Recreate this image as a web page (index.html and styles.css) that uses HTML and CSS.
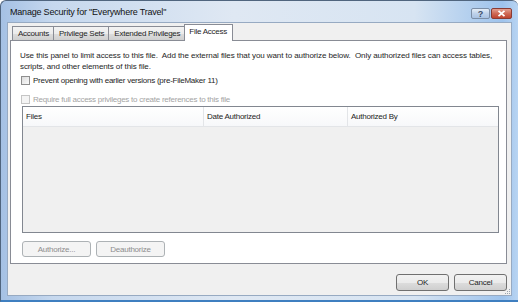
FILE: index.html
```html
<!DOCTYPE html>
<html lang="en">
<head>
    <meta charset="UTF-8">
    <meta name="viewport" content="width=device-width, initial-scale=1.0">
    <title>Manage Security</title>
    <link rel="stylesheet" href="styles.css">
</head>
<body>
<div class="window">
    <div class="titlebar">
        <span class="title">Manage Security for "Everywhere Travel"</span>
        <div class="caption-buttons">
            <span class="cap-btn help">?</span>
            <span class="cap-btn close">
                <svg width="9" height="7" viewBox="0 0 9 7"><path d="M1.5 0.8 L7.5 6.2 M7.5 0.8 L1.5 6.2" stroke="#fff" stroke-width="1.8"/></svg>
            </span>
        </div>
    </div>

    <div class="client">
        <ul class="tabs">
            <li class="tab">Accounts</li>
            <li class="tab">Privilege Sets</li>
            <li class="tab">Extended Privileges</li>
            <li class="tab active">File Access</li>
        </ul>

        <section class="panel">
            <p class="intro">Use this panel to limit access to this file.&nbsp; Add the external files that you want to authorize below.&nbsp; Only authorized files can access tables, scripts, and other elements of this file.</p>

            <label class="check-row"><span class="check"></span>Prevent opening with earlier versions (pre-FileMaker 11)</label>
            <label class="check-row disabled"><span class="check"></span>Require full access privileges to create references to this file</label>

            <div class="listbox">
                <div class="list-header">
                    <span class="col col-files">Files</span>
                    <span class="col col-date">Date Authorized</span>
                    <span class="col col-by">Authorized By</span>
                </div>
                <div class="list-body"></div>
            </div>

            <div class="panel-buttons">
                <button class="btn" disabled>Authorize...</button>
                <button class="btn" disabled>Deauthorize</button>
            </div>
        </section>

        <div class="dialog-buttons">
            <button class="btn btn-wide">OK</button>
            <button class="btn btn-wide">Cancel</button>
        </div>

        <!-- size grip -->
        <svg class="grip" width="6" height="6" viewBox="0 0 6 6">
            <rect x="4" y="0" width="1" height="1" fill="#9aa4ae"/>
            <rect x="2" y="2" width="1" height="1" fill="#9aa4ae"/>
            <rect x="4" y="2" width="1" height="1" fill="#9aa4ae"/>
            <rect x="0" y="4" width="1" height="1" fill="#9aa4ae"/>
            <rect x="2" y="4" width="1" height="1" fill="#9aa4ae"/>
            <rect x="4" y="4" width="1" height="1" fill="#9aa4ae"/>
        </svg>
    </div>
</div>
</body>
</html>
```

FILE: styles.css
```css
* {
    margin: 0;
    padding: 0;
    box-sizing: border-box;
}

html, body {
    height: 100%;
}

body {
    font-family: "Liberation Sans", Arial, sans-serif;
    font-size: 8px;
    letter-spacing: -0.25px;
    color: #1e1e1e;
    background-color: #fff;
}

/* Window frame */
.window {
    width: 518px;
    height: 302px;
    display: flex;
    flex-direction: column;
    border: 1px solid #50657e;
    border-right: none;
    border-bottom: 2px solid #3f7fc0;
    border-radius: 6px 6px 0 0;
    background: linear-gradient(to right, #a5c1e4 0%, #c6d8ee 10%, #dfe8f3 45%, #d7e4f2 80%, #9ec3ec 97%, #b8d4f2 100%);
    overflow: hidden;
}

.titlebar {
    height: 21px;
    display: flex;
    align-items: center;
    justify-content: space-between;
    padding: 0 6px 0 9px;
}

.title {
    font-size: 9px;
    letter-spacing: -0.2px;
    color: #111;
    margin-top: 1px;
}

.caption-buttons {
    display: flex;
    gap: 1px;
    align-self: flex-start;
    margin-top: 7px;
}

.cap-btn {
    display: flex;
    align-items: center;
    justify-content: center;
    height: 11px;
    border-radius: 2px;
    border: 1px solid #7c8ea6;
    font-size: 9px;
    font-weight: bold;
    letter-spacing: 0;
}

.cap-btn.help {
    width: 19px;
    color: #3c4f68;
    background: linear-gradient(to bottom, #e4edf7, #bfd2ea 50%, #a9c2e2);
}

.cap-btn.close {
    width: 21px;
    border-color: #8a3b33;
    background: linear-gradient(to bottom, #e3a091, #cf6a56 50%, #be4430);
}

/* Client area */
.client {
    position: relative;
    flex: 1;
    margin: 0 6px 4px 6px;
    padding: 1px 4px 0 2px;
    background-color: #f0f0f0;
    border: 1px solid #97aac2;
}

.tabs {
    list-style: none;
    display: flex;
    align-items: flex-end;
    height: 16px;
    margin-left: 2px;
}

.tab {
    height: 14px;
    padding: 0 4px 0 5px;
    margin-right: -1px;
    line-height: 13px;
    border: 1px solid #898c95;
    border-bottom: none;
    background: linear-gradient(to bottom, #f3f3f3, #ebebeb 50%, #dddddd 51%, #cfcfcf);
    white-space: nowrap;
}

.tab.active {
    position: relative;
    z-index: 1;
    height: 17px;
    margin-bottom: -1px;
    padding: 0 5px 0 4px;
    line-height: 14px;
    background: #fff;
}

.panel {
    height: 224px;
    padding: 9px 7px 0 9px;
    border: 1px solid #898c95;
    background-color: #fff;
}

.intro {
    line-height: 11px;
    letter-spacing: -0.1px;
    word-spacing: 0.1px;
    margin-bottom: 3px;
}

.check-row {
    display: flex;
    align-items: center;
    height: 11px;
    margin-left: 1px;
    margin-bottom: 8px;
}

.check-row .check {
    width: 9px;
    height: 9px;
    margin-right: 3px;
    border: 1px solid #8f8f8f;
    background: linear-gradient(135deg, #dcdcdc, #fbfbfb);
}

.check-row.disabled {
    color: #a3a3a3;
    margin-bottom: 1px;
}

.check-row.disabled .check {
    border-color: #c5c5c5;
    background: #f4f4f4;
}

/* List */
.listbox {
    height: 127px;
    margin-left: 2px;
    display: flex;
    flex-direction: column;
    border: 1px solid #828790;
    background-color: #f0f0f0;
}

.list-header {
    display: flex;
    height: 20px;
    background: linear-gradient(to bottom, #ffffff, #f7f8fa);
    border-bottom: 1px solid #e3e5e8;
}

.col {
    display: flex;
    align-items: center;
    padding-left: 3px;
    border-right: 1px solid #e3e5e8;
}

.col-files {
    width: 181px;
}

.col-date {
    width: 144px;
}

.col-by {
    flex: 1;
    border-right: none;
}

.list-body {
    flex: 1;
}

/* Buttons */
.panel-buttons {
    display: flex;
    gap: 5px;
    margin: 8px 0 0 2px;
}

.btn {
    font-family: inherit;
    font-size: 8px;
    letter-spacing: -0.25px;
    width: 69px;
    height: 16px;
    color: #1e1e1e;
    border: 1px solid #707070;
    border-radius: 3px;
    background: linear-gradient(to bottom, #f2f2f2, #ebebeb 50%, #dddddd 51%, #cfcfcf);
}

.btn:disabled {
    color: #8d8d8d;
    border-color: #adb2b5;
    background: #f4f4f4;
}

.dialog-buttons {
    display: flex;
    justify-content: flex-end;
    gap: 5px;
    margin-top: 10px;
}

.btn-wide {
    width: 53px;
    height: 17px;
}

.grip {
    position: absolute;
    right: 0;
    bottom: 0;
}
```
